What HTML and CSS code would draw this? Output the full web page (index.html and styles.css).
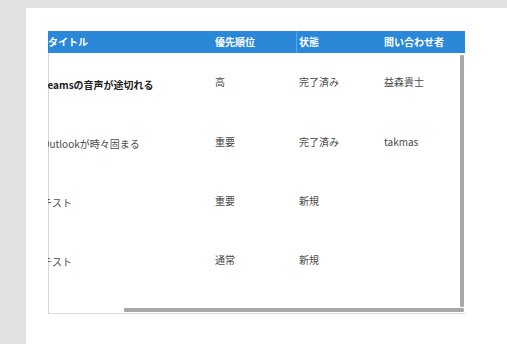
FILE: index.html
```html
<!DOCTYPE html>
<html lang="ja">
<head>
<meta charset="utf-8">
<link rel="stylesheet" href="styles.css">
</head>
<body>
<div class="panel">
  <div class="table">
    <div class="inner">
      <div class="row head">
        <div class="cell c1 headtitle">タイトル</div>
        <div class="cell c2">優先順位</div>
        <div class="cell c3 divider">状態</div>
        <div class="cell c4">問い合わせ者</div>
      </div>
      <div class="row">
        <div class="cell c1 strong down">Teamsの音声が途切れる</div>
        <div class="cell c2 up">高</div>
        <div class="cell c3 up">完了済み</div>
        <div class="cell c4 up">益森貴士</div>
      </div>
      <div class="row">
        <div class="cell c1 down">Outlookが時々固まる</div>
        <div class="cell c2">重要</div>
        <div class="cell c3">完了済み</div>
        <div class="cell c4">takmas</div>
      </div>
      <div class="row">
        <div class="cell c1 down">テスト</div>
        <div class="cell c2">重要</div>
        <div class="cell c3">新規</div>
        <div class="cell c4"></div>
      </div>
      <div class="row">
        <div class="cell c1 down">テスト</div>
        <div class="cell c2">通常</div>
        <div class="cell c3">新規</div>
        <div class="cell c4"></div>
      </div>
    </div>
    <div class="vscroll"></div>
    <div class="hscroll"></div>
  </div>
</div>
</body>
</html>
```

FILE: styles.css
```css
html, body {
  margin: 0;
  padding: 0;
  height: 100%;
}
body {
  background: #e1e1e1;
  font-family: "Noto Sans CJK JP", "Noto Sans", sans-serif;
  overflow: hidden;
}
.panel {
  margin-left: 26px;
  margin-top: 8px;
  height: 336px;
  background: #ffffff;
  padding: 23px 0 0 22px;
  box-sizing: border-box;
}
.table {
  position: relative;
  width: 417px;
  height: 283px;
  overflow: hidden;
  border-bottom: 1px solid #dcdcdc;
  box-sizing: border-box;
}
.table::before {
  content: "";
  position: absolute;
  left: 0;
  top: 22px;
  bottom: 0;
  width: 1px;
  background: #d6d6d6;
}
.inner {
  margin-left: -6px;
  width: 440px;
}
.row {
  display: grid;
  grid-template-columns: 173px 81px 88px 98px;
  height: 59px;
  align-items: center;
  font-size: 10px;
  color: #4a4a4a;
}
.row.head {
  height: 22px;
  background: #2b88d8;
  color: #ffffff;
  font-weight: 700;
  align-items: stretch;
}
.head .cell {
  display: flex;
  align-items: center;
}
.headtitle {
  padding-left: 6px;
}
.cell {
  white-space: nowrap;
  line-height: 14px;
}
.c3 {
  padding-left: 3px;
}
.divider {
  border-left: 1px solid #5aa5e6;
  padding-left: 2px;
}
.strong {
  font-weight: 700;
  color: #222;
}
.up {
  position: relative;
  top: -1px;
}
.down {
  position: relative;
  top: 2px;
}
.vscroll {
  position: absolute;
  left: 412px;
  top: 24px;
  width: 4px;
  height: 252px;
  background: #a8a8a8;
  border-radius: 1px;
}
.hscroll {
  position: absolute;
  left: 76px;
  top: 277px;
  width: 340px;
  height: 4px;
  background: #a8a8a8;
  border-radius: 1px;
}
```
